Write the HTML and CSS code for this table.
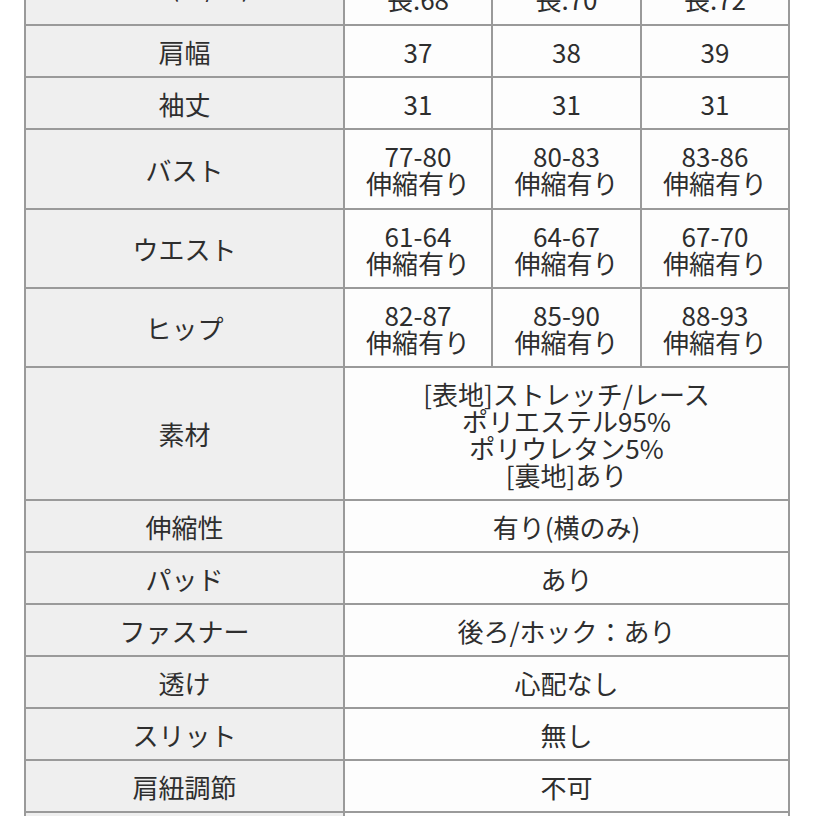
FILE: index.html
```html
<!DOCTYPE html>
<html lang="ja">
<head>
<meta charset="utf-8">
<link rel="stylesheet" href="styles.css">
</head>
<body>
<div class="chart">
  <div class="lbl r-top">着丈(前/後)</div>
  <div class="val r-top">前:60<br>長:68</div>
  <div class="val r-top">前:62<br>長:70</div>
  <div class="val r-top">前:64<br>長:72</div>

  <div class="lbl">肩幅</div>
  <div class="val">37</div>
  <div class="val">38</div>
  <div class="val">39</div>

  <div class="lbl">袖丈</div>
  <div class="val">31</div>
  <div class="val">31</div>
  <div class="val">31</div>

  <div class="lbl">バスト</div>
  <div class="val">77-80<br>伸縮有り</div>
  <div class="val">80-83<br>伸縮有り</div>
  <div class="val">83-86<br>伸縮有り</div>

  <div class="lbl">ウエスト</div>
  <div class="val">61-64<br>伸縮有り</div>
  <div class="val">64-67<br>伸縮有り</div>
  <div class="val">67-70<br>伸縮有り</div>

  <div class="lbl">ヒップ</div>
  <div class="val">82-87<br>伸縮有り</div>
  <div class="val">85-90<br>伸縮有り</div>
  <div class="val">88-93<br>伸縮有り</div>

  <div class="lbl">素材</div>
  <div class="val wide">[表地]ストレッチ/レース<br>ポリエステル95%<br>ポリウレタン5%<br>[裏地]あり</div>

  <div class="lbl">伸縮性</div>
  <div class="val wide">有り(横のみ)</div>

  <div class="lbl">パッド</div>
  <div class="val wide">あり</div>

  <div class="lbl">ファスナー</div>
  <div class="val wide">後ろ/ホック：あり</div>

  <div class="lbl">透け</div>
  <div class="val wide">心配なし</div>

  <div class="lbl">スリット</div>
  <div class="val wide">無し</div>

  <div class="lbl">肩紐調節</div>
  <div class="val wide">不可</div>

  <div class="lbl">生地の厚さ</div>
  <div class="val wide">普通</div>
</div>
</body>
</html>
```

FILE: styles.css
```css
html, body {
  margin: 0;
  padding: 0;
  background: #ffffff;
  overflow: hidden;
}

body {
  font-family: "Noto Sans CJK JP", "Noto Sans", sans-serif;
  color: #2e2e2e;
}

.chart {
  display: grid;
  grid-template-columns: 317px 146px 147px 146px;
  grid-template-rows: 78px 50px 50px 78px 77px 77px 131px 50px 50px 50px 50px 50px 50px 50px;
  gap: 2px;
  padding: 2px;
  width: max-content;
  margin: -56px 0 0 24px;
  background: #9a9a9a;
}

.lbl,
.val {
  display: flex;
  align-items: center;
  justify-content: center;
  text-align: center;
  font-size: 26px;
  line-height: 27px;
}

.lbl {
  background: #efefef;
}

.val {
  background: #fdfdfd;
}

.wide {
  grid-column: 2 / 5;
}
```
